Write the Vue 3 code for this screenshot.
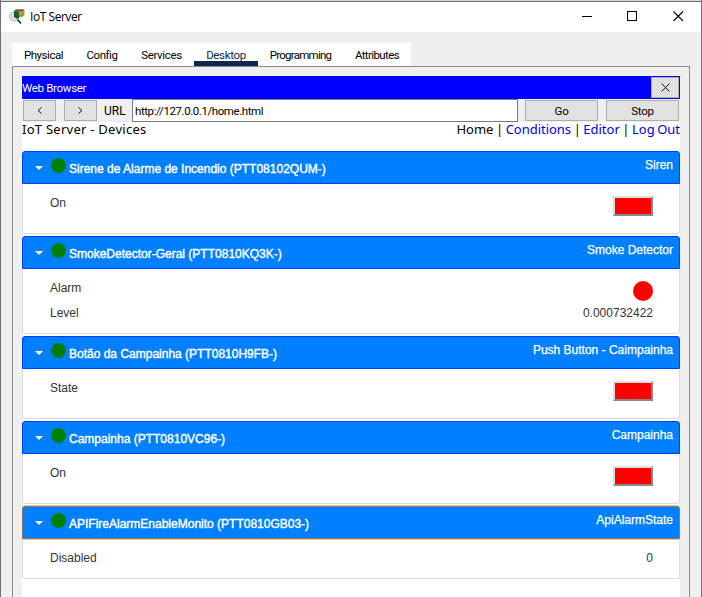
<script setup>
const tabs = [
  { name: 'Physical', cls: 'physical' },
  { name: 'Config', cls: 'config' },
  { name: 'Services', cls: 'services' },
  { name: 'Desktop', cls: 'active' },
  { name: 'Programming', cls: 'programming' },
  { name: 'Attributes', cls: 'attributes' },
]

const devices = [
  { title: 'Sirene de Alarme de Incendio (PTT08102QUM-)', type: 'Siren', rows: [{ label: 'On', kind: 'button' }] },
  {
    title: 'SmokeDetector-Geral (PTT0810KQ3K-)', type: 'Smoke Detector',
    rows: [{ label: 'Alarm', kind: 'lamp' }, { label: 'Level', kind: 'value', value: '0.000732422' }],
  },
  { title: 'Botão da Campainha (PTT0810H9FB-)', type: 'Push Button - Caimpainha', rows: [{ label: 'State', kind: 'button' }] },
  { title: 'Campainha (PTT0810VC96-)', type: 'Campainha', rows: [{ label: 'On', kind: 'button' }] },
  { title: 'APIFireAlarmEnableMonito (PTT0810GB03-)', type: 'ApiAlarmState', focused: true, rows: [{ label: 'Disabled', kind: 'value', value: '0' }] },
]
</script>

<template>
  <div class="window">
    <header class="titlebar">
      <svg class="app-icon" width="16" height="16" viewBox="0 0 16 16">
        <circle cx="5" cy="7.5" r="4.6" fill="#dcdfe0" stroke="#b9bdbe" />
        <path d="M5 2L7 0.5H15.5V6L13 8H5Z" fill="#b58a3c" />
        <path d="M5 2L7 0.5H15L13.5 2.5Z" fill="#6d572c" />
        <path d="M8 3L11 5L14 2" stroke="#e5c071" fill="none" />
        <path d="M5 2.5H9L10 4V9.5H7L5 7.5Z" fill="#075f20" />
        <path d="M6 4L8 6" stroke="#26a12c" />
        <path d="M8.5 10.5L12 14.5" stroke="#272727" stroke-width="1.5" />
      </svg>
      <span class="app-name">IoT Server</span>
      <svg class="controls" width="103" height="12" viewBox="0 0 103 12" fill="none" stroke="#000">
        <path d="M0 5.5H10" />
        <rect x="45.5" y=".5" width="9" height="9" />
        <path d="M91.5 .5L101 10M101 .5L91.5 10" stroke-width="1.1" />
      </svg>
    </header>

    <nav class="tabs">
      <div v-for="t in tabs" :key="t.name" class="tab" :class="t.cls"><span>{{ t.name }}</span></div>
    </nav>

    <section class="pane">
      <div class="browser-title">
        <span>Web Browser</span>
        <button class="btn close">
          <svg width="9" height="9" viewBox="0 0 9 9"><path d="M.5 .5L8.5 8.5M8.5 .5L.5 8.5" stroke="#111" /></svg>
        </button>
      </div>
      <div class="toolbar">
        <button class="btn nav">
          <svg width="5" height="7" viewBox="0 0 5 7"><path d="M4.5 .5L1 3.5L4.5 6.5" stroke="#111" fill="none" /></svg>
        </button>
        <button class="btn nav forward">
          <svg width="5" height="7" viewBox="0 0 5 7"><path d="M.5 .5L4 3.5L.5 6.5" stroke="#111" fill="none" /></svg>
        </button>
        <span class="url-label">URL</span>
        <div class="url">http://127.0.0.1/home.html</div>
        <button class="btn action">Go</button>
        <button class="btn action stop">Stop</button>
      </div>

      <main class="page">
        <div class="page-head">
          <span class="page-title">IoT Server - Devices</span>
          <span class="links">Home | <a>Conditions</a> | <a>Editor</a> | <a>Log Out</a></span>
        </div>
        <article v-for="d in devices" :key="d.title" class="device">
          <div class="device-head" :class="{ focused: d.focused }">
            <i class="caret"></i>
            <i class="status"></i>
            <span class="device-title">{{ d.title }}</span>
            <span class="device-type">{{ d.type }}</span>
          </div>
          <div class="device-body">
            <div v-for="r in d.rows" :key="r.label" class="row" :class="r.kind">
              <span>{{ r.label }}</span>
              <i v-if="r.kind === 'button'" class="push"></i>
              <i v-else-if="r.kind === 'lamp'" class="bulb"></i>
              <span v-else>{{ r.value }}</span>
            </div>
          </div>
        </article>
      </main>
    </section>
  </div>
</template>

<style>
body { margin: 0; overflow: hidden; }
</style>

<style scoped>
* { box-sizing: border-box; }
.window {
  width: 702px; height: 597px; overflow: hidden;
  display: flex; flex-direction: column;
  background: #efefef; border: 1px solid #707070; border-width: 0 1px;
  font: 11.5px Roboto, "Liberation Sans", sans-serif; color: #000;
}
.titlebar {
  height: 32px; flex: none; background: #fff;
  border-top: 1px solid #d8d8d8; box-shadow: inset 0 1px #707070;
  display: flex; align-items: flex-start; padding: 8px 16px 0 8px;
}
.app-name { margin: 0 auto 0 5px; line-height: 16px; font-family: "Open Sans", sans-serif; font-size: 12px; letter-spacing: -.45px; }
.controls { margin-top: 2px; }
.tabs { margin: 11px 0 0 11px; height: 23px; flex: none; width: 399px; background: #fff; display: flex; }
.tab { line-height: 24px; text-align: center; white-space: nowrap; letter-spacing: -.45px; }
.physical { width: 63px; }
.config { width: 54px; }
.services { width: 65px; letter-spacing: -.35px; }
.active { width: 64px; color: #0d274d; border-bottom: 5px solid #0d274d; letter-spacing: -.35px; }
.programming { width: 85px; letter-spacing: -.75px; }
.attributes { width: 68px; letter-spacing: -.6px; }
.pane { flex: 1; margin: 0 11px 0 11px; border: 1px solid #868b91; border-bottom: 0; padding: 9px 9px 0; display: flex; flex-direction: column; min-height: 0; }
.browser-title { height: 23px; flex: none; background: #00f; color: #fff; display: flex; justify-content: space-between; line-height: 24px; letter-spacing: -.3px; padding-right: 1px; }
.btn { border: 1px solid #adadad; background: #e1e1e1; padding: 0; font: inherit; color: #000; display: flex; align-items: center; justify-content: center; height: 21px; flex: none; }
.close { width: 28px; margin-top: 1px; }
.toolbar { height: 23px; flex: none; display: flex; align-items: center; padding: 0 1px; }
.nav { width: 33px; }
.forward { margin-left: 8px; }
.url-label { width: 35px; padding-left: 7px; white-space: nowrap; font-size: 12px; }
.url { width: 386px; height: 23px; background: #fff; border: 1px solid #7a7a7a; line-height: 22px; padding-left: 2px; letter-spacing: -.42px; }
.action { width: 73px; margin-left: 7px; letter-spacing: -.2px; }
.stop { margin-left: 8px; }
.page { flex: 1; background: #fff; min-height: 0; }
.page-head { height: 29px; display: flex; justify-content: space-between; font: 13px/14px "Noto Sans", "DejaVu Sans", sans-serif; white-space: nowrap; }
.page-title { letter-spacing: .26px; }
.links { letter-spacing: -.02px; word-spacing: -.8px; }
.links a { color: #0000e0; }
.device { margin-bottom: 2px; font: 12px/15px "Liberation Sans", Arial, sans-serif; }
.device-head {
  height: 33px; display: flex; background: #007fff; border: 1px solid #003eff; border-radius: 3px 3px 0 0;
  color: #fff; -webkit-text-stroke: .25px #fff;
}
.device-head.focused { border-color: #8b7770; box-shadow: 0 -1px #efc98e, 0 1px #efc98e; }
.caret { margin: 14px 0 0 12px; width: 0; height: 0; border: 4px solid transparent; border-top-color: #fff; border-bottom: 0; }
.status { width: 15px; height: 15px; border-radius: 50%; background: #008000; margin: 6px 3px 0 8px; }
.device-title { padding-top: 10px; -webkit-text-stroke-width: .4px; }
.device-type { margin: 6px 6px 0 auto; }
.device-body { border: 1px solid #ddd; border-top: 0; border-radius: 0 0 3px 3px; padding: 7px 26px 7px 27px; color: #333; }
.row { height: 25px; padding-top: 5px; display: flex; justify-content: space-between; }
.row.button { height: 35px; }
.push { width: 40px; height: 20px; border: 2px solid; border-color: #ddd #888 #888 #ddd; background: #f00; }
.bulb { width: 20px; height: 20px; border-radius: 50%; background: #f00; }
</style>
